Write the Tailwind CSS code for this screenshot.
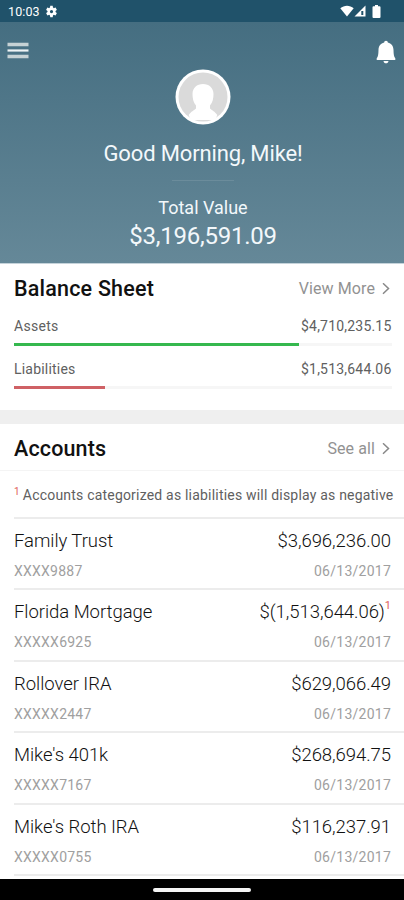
<!DOCTYPE html>
<html lang="en">
<head>
  <meta charset="UTF-8" />
  <meta name="viewport" content="width=device-width, initial-scale=1.0" />
  <title>Accounts overview</title>
  <script src="https://cdn.jsdelivr.net/npm/@tailwindcss/browser@4"></script>
</head>
<body class="bg-white font-[Roboto,sans-serif] text-[#333]">
  <div class="w-[404px] h-[900px] overflow-hidden flex flex-col">

    <!-- Status bar -->
    <div class="h-[22px] shrink-0 bg-[#20526a] text-white flex items-center pl-2 pr-[23px]">
      <span class="text-[12.5px] leading-none tracking-[0.1px] pt-[2px]">10:03</span>
      <svg class="w-[13px] h-[13px] ml-[5px]" viewBox="0 0 24 24" fill="currentColor"><path fill-rule="evenodd" d="M19.400 13c.1-.3.1-.7.1-1s0-.7-.1-1l2.300-1.700c.2-.2.3-.5.1-.7l-2.100-3.700c-.1-.2-.4-.3-.7-.2l-2.600 1.100c-.5-.4-1.100-.8-1.700-1L14.300 2c0-.3-.3-.5-.5-.5h-3.600c-.3 0-.5.2-.6.500l-.4 2.800c-.6.200-1.200.600-1.700 1L4.900 4.700c-.2-.1-.5 0-.7.200L2.200 8.600c-.1.2-.1.500.1.700L4.600 11v2l-2.300 1.700c-.2.200-.3.500-.1.700l2 3.700c.2.200.5.300.7.200l2.600-1.100c.5.400 1.100.800 1.700 1l.4 2.800c.1.300.3.500.6.500h3.600c.2 0 .5-.2.500-.5l.4-2.800c.6-.2 1.200-.6 1.700-1l2.600 1.100c.3.100.6 0 .7-.2l2.100-3.700c.2-.2.1-.5-.1-.7zM12 15a3 3 0 1 1 0-6 3 3 0 0 1 0 6z"/></svg>
      <svg class="w-[14px] h-[12px] ml-auto" viewBox="0 0 14 12" fill="currentColor"><path d="M7 11.500.3 3.200C4.200-.2 9.800-.2 13.700 3.200z"/></svg>
      <svg class="w-[12px] h-[12px]" viewBox="0 0 12 12"><path d="M11.500.5v11H.5z" fill="#fff"/><path d="M8.300 6v4" stroke="#20526a" stroke-width="2"/></svg>
      <svg class="w-[9px] h-[13px] ml-[6px]" viewBox="0 0 9 13" fill="currentColor"><path d="M3 0h3v1.200h1.500q1 0 1 1v9.800q0 1-1 1h-6q-1 0-1-1V2.200q0-1 1-1H3z"/></svg>
    </div>

    <!-- Greeting -->
    <header class="relative h-[241px] shrink-0 bg-linear-to-b from-[#456e81] to-[#658898] text-[#f3f8fb] flex flex-col items-center pt-[47px] pl-[2px]">
      <svg class="absolute left-[7px] top-[20px] w-[22px] h-[17px]" viewBox="0 0 22 17"><path d="M.5 2.500h21M.5 14.500h21" stroke="#c6d2d5" stroke-width="3.300"/><path d="M.5 8.500h21" stroke="#eef4f5" stroke-width="2.200"/></svg>
      <svg class="absolute right-[7px] top-[18px] w-[22px] h-[24px]" viewBox="0 0 22 24" fill="#fff"><path d="M11 .7c1.100 0 1.800.8 1.800 1.800 3.600.8 5.600 3.600 5.700 7.500.1 4.600.4 7 1.800 8.200v1.900H1.700v-1.900c1.400-1.200 1.700-3.600 1.800-8.200.1-3.900 2.100-6.700 5.700-7.500 0-1 .7-1.800 1.800-1.800zM8.500 20.900h5c-.2 1.500-1.200 2.300-2.500 2.300s-2.300-.8-2.500-2.300z"/></svg>
      <svg class="w-[56px] h-[56px] shrink-0" viewBox="0 0 56 56">
        <circle cx="28" cy="28" r="27.500" fill="#fff"/>
        <circle cx="28" cy="28" r="24.500" fill="#dadada"/>
        <path d="M28 15c-6.200 0-10.500 4-10.500 10 0 4 .8 8.500 3.500 11.500v3c-2.500 2.500-4.500 2.500-7.300 6.500l2 5h24.600l2-5c-2.800-4-4.800-4-7.300-6.500v-3c2.700-3 3.500-7.500 3.500-11.500 0-6-4.300-10-10.500-10z" fill="#fff"/>
      </svg>
      <h1 class="text-[22px] leading-[28px] tracking-[-0.15px] mt-[15px]">Good Morning, Mike!</h1>
      <div class="w-[62px] h-px bg-white/10 mt-[12px]"></div>
      <p class="text-[18px] leading-[22px] mt-[16px]">Total Value</p>
      <p class="text-[24px] leading-[28px] tracking-[-0.25px] mt-[3px]">$3,196,591.09</p>
    </header>

    <!-- Balance sheet -->
    <section class="h-[147px] shrink-0 border-t border-[#c5d3da] px-[14px]">
      <div class="flex justify-between items-center h-[49px] pt-px">
        <h2 class="text-[21.5px] font-medium text-[#111] tracking-[0.2px]">Balance Sheet</h2>
        <a class="flex items-center text-[16px] text-[#929292] tracking-[0.1px]">View More
          <svg class="w-[8px] h-[12px] ml-[7px]" viewBox="0 0 8 12" fill="none" stroke="#888" stroke-width="1.500"><path d="M1 .3 6.500 5.500 1 10.700"/></svg>
        </a>
      </div>
      <div class="flex justify-between text-[14px] leading-[20px] mt-[3px] text-[#606060] tracking-[0.2px] -mr-[1.500px]"><span class="tracking-[0.3px]">Assets</span><span>$4,710,235.15</span></div>
      <div class="h-[3px] mt-[7px] flex items-center -mr-[2px] bg-[#f6f6f6]"><div class="h-[3px] bg-[#35b84e]" style="width: 75.500%"></div></div>
      <div class="flex justify-between text-[14px] leading-[20px] mt-[13px] text-[#606060] tracking-[0.2px] -mr-[1.500px]"><span>Liabilities</span><span>$1,513,644.06</span></div>
      <div class="h-[3px] mt-[7px] flex items-center -mr-[2px] bg-[#f6f6f6]"><div class="h-[3px] bg-[#cf6165]" style="width: 24.200%"></div></div>
    </section>

    <div class="h-[14px] shrink-0 bg-[#efefef]"></div>

    <!-- Accounts -->
    <section class="flex-1 min-h-0 overflow-hidden">
      <div class="flex justify-between items-center h-[47px] pt-[3px] px-[14px] border-b border-[#f4f4f4]">
        <h2 class="text-[21.5px] font-medium text-[#111] tracking-[0.15px] pt-px">Accounts</h2>
        <a class="flex items-center text-[16px] text-[#929292] tracking-[0.1px]">See all
          <svg class="w-[8px] h-[12px] ml-[7px]" viewBox="0 0 8 12" fill="none" stroke="#888" stroke-width="1.500"><path d="M1 .3 6.500 5.500 1 10.700"/></svg>
        </a>
      </div>
      <div class="ml-[14px] h-[48px] pt-[3px] border-b-2 border-[#ececec] flex items-center whitespace-nowrap text-[14px] text-[#606060] tracking-[0.2px]">
        <span class="text-[10px] text-[#e0605a] -mt-[8px] mr-[3px]">1</span>Accounts categorized as liabilities will display as negative
      </div>
      <div id="accounts" class="ml-[14px]"></div>
    </section>

    <!-- Navigation bar -->
    <div class="h-[21px] shrink-0 bg-black flex justify-center items-center">
      <div class="w-[98px] h-[4px] rounded-full bg-[#f5f5f5]"></div>
    </div>
  </div>

  <script>
    const accounts = [
      { name: 'Family Trust', number: 'XXXX9887', value: '$3,696,236.00' },
      { name: 'Florida Mortgage', number: 'XXXXX6925', value: '$(1,513,644.06)', liability: true },
      { name: 'Rollover IRA', number: 'XXXXX2447', value: '$629,066.49' },
      { name: "Mike's 401k", number: 'XXXXX7167', value: '$268,694.75' },
      { name: "Mike's Roth IRA", number: 'XXXXX0755', value: '$116,237.91' },
    ];

    document.getElementById('accounts').innerHTML = accounts.map(a => `
      <div class="h-[71.400px] border-b-2 border-[#ececec] pr-[13px] pt-[9px]">
        <div class="flex justify-between text-[18.500px] leading-[26px] font-light text-[#111] tracking-[-0.05px]">
          <span>${a.name}</span>
          <span class="flex">${a.value}${a.liability ? '<sup class="text-[11px] leading-[14px] font-normal text-[#e0605a] top-0">1</sup>' : ''}</span>
        </div>
        <div class="flex justify-between text-[14px] leading-[20px] mt-[7px] text-[#a0a0a0] tracking-[0.25px]">
          <span>${a.number}</span><span>06/13/2017</span>
        </div>
      </div>`).join('');
  </script>
</body>
</html>
